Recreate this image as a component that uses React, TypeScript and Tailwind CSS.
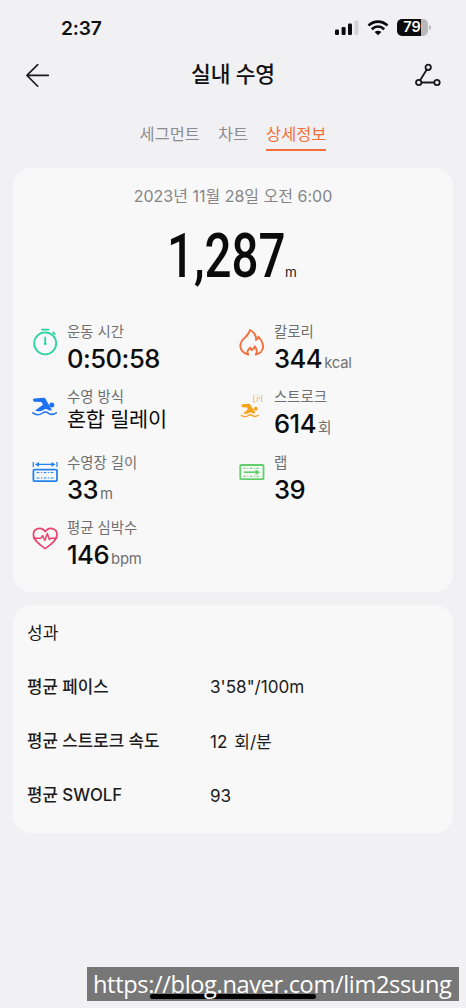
import type { ReactNode } from "react";

const SignalIcon = () => (
  <svg width="24" height="16" viewBox="0 0 24 16">
    <rect x="0" y="9.5" width="4" height="5.5" rx="1.2" fill="#0b0b0c" />
    <rect x="6.6" y="7" width="4" height="8" rx="1.2" fill="#0b0b0c" />
    <rect x="13" y="3.5" width="4" height="11.5" rx="1.2" fill="#0b0b0c" />
    <rect x="19.4" y="0.5" width="4" height="14.5" rx="1.2" fill="#d3d3d6" />
  </svg>
);

const WifiIcon = () => (
  <svg width="22" height="16" viewBox="0 0 22 16" fill="none" stroke="#0b0b0c" strokeWidth="2.7">
    <path d="M1.5 5.6C7 .4 15 .4 20.5 5.6" />
    <path d="M4.8 9.2c3.7-3.4 8.7-3.4 12.4 0" />
    <path d="M11 15.2 7.6 12c2-1.7 4.8-1.7 6.8 0z" fill="#0b0b0c" stroke="none" />
  </svg>
);

const Battery = () => (
  <div className="flex items-center">
    <div className="flex h-[17px] w-[31px] items-center justify-center rounded-[5px] bg-linear-to-r from-[#0b0b0c] from-79% to-[#b9b9bc] to-79%">
      <span className="pr-px text-[14.5px] leading-none font-semibold text-white">79</span>
    </div>
    <div className="ml-px h-[5px] w-[2px] rounded-r-full bg-[#bcbcbf]" />
  </div>
);

const BackIcon = () => (
  <svg width="24" height="24" viewBox="0 0 24 24" fill="none" stroke="#19191a" strokeWidth="1.6" strokeLinecap="round" strokeLinejoin="round">
    <path d="M23.5 12.4H1.9M12.7 1.6 1.9 12.4l10.8 10.8" />
  </svg>
);

const RouteIcon = () => (
  <svg width="26" height="24" viewBox="0 0 26 24" fill="none" stroke="#19191a" strokeWidth="1.8">
    <circle cx="13.2" cy="4.3" r="2.7" />
    <circle cx="3.7" cy="19.5" r="2.7" />
    <circle cx="22" cy="19.5" r="2.7" />
    <path d="M11.8 6.6 5.1 17.2M6.4 19.5h12.9" />
  </svg>
);

const TimerIcon = () => (
  <svg width="28" height="28" viewBox="0 0 28 28" fill="none" stroke="#2bd3a0" strokeWidth="1.8" strokeLinecap="round">
    <circle cx="14.2" cy="15.3" r="11" />
    <path d="M11 1.6h6.6M22.2 4.5l1.6 1.6M14.2 9.4v5.6" />
    <circle cx="14.2" cy="15.8" r="1.4" fill="#2bd3a0" stroke="none" />
  </svg>
);

const SwimIcon = () => (
  <svg width="28" height="28" viewBox="0 0 28 28">
    <path
      d="M3.3 5.6 12.4 4.7c1-.1 1.7.4 2.2 1.2l6.3 11.3c-1.7.7-3.1-.1-4.4-.8-1.4-.7-2.8-.4-4.2.5-2.2 1.4-5.2 1.8-8.3.6l8-5.8-1.6-2.6-6.9-.4c-1.8-.1-2.1-2.9-.2-3.1z"
      fill="#1c72f3"
    />
    <circle cx="20.8" cy="11.9" r="2.5" fill="#1c72f3" />
    <path
      d="M1.8 19.8c3.3 2.6 6.8 2.2 9.7.2 2.2-1.5 4.2-1.1 6.2.3 2.3 1.5 5 1.4 7.6-.5"
      fill="none"
      stroke="#1c72f3"
      strokeWidth="1.5"
      strokeLinecap="round"
    />
  </svg>
);

const PoolIcon = () => (
  <svg width="28" height="28" viewBox="0 0 28 28" fill="none" stroke="#2583ee" strokeWidth="1.3">
    <path d="M2.3 3v5M26 3v5M5 5.4h18" />
    <path d="M3.8 5.4 8 3v4.8zM24.6 5.4 20.4 3v4.8z" fill="#2583ee" stroke="none" />
    <rect x="2.4" y="10.6" width="23.6" height="11.5" rx="0.8" strokeWidth="1.8" />
    <path d="M5.5 13.6h17.5M5.5 19h17.5" strokeWidth="1" strokeDasharray="3 1.4 1.2 1.4" />
  </svg>
);

const HeartIcon = () => (
  <svg width="28" height="28" viewBox="0 0 28 28" fill="none" stroke="#ea4673" strokeWidth="1.7" strokeLinecap="round" strokeLinejoin="round">
    <path d="M14.2 24.6C8.2 20.4 2.4 16 2.4 10.4c0-6.3 8.2-8.2 11.8-2.9C17.8 2.2 26 4.1 26 10.4c0 5.6-5.8 10-11.8 14.2z" />
    <path d="M3 14.3h6.8l1.8-2.7 2.2 4.8 2.5-7 2 6.2 1.3-1.3h5.9" strokeWidth="1.5" />
  </svg>
);

const FireIcon = () => (
  <svg width="28" height="28" viewBox="0 0 28 28" fill="none" stroke="#f2713d" strokeWidth="1.9" strokeLinecap="round" strokeLinejoin="round">
    <path d="M10.4 26.6C.3 24 .8 15 6.3 10.1 9.6 7.2 11.4 5 11.9 2c4 2 6.3 5.7 6.2 10 1.3-.6 2-1.7 2.2-3.2 7 7 6.4 15.6-2.6 17.8 2.2-3 1.1-5.6-.9-8.4-.4 2-1.4 3.2-3 4-.7-.8-1.1-1.6-1.2-2.6-3 2-4.1 4.6-2.2 7z" />
  </svg>
);

const StrokeIcon = () => (
  <svg width="28" height="28" viewBox="0 0 28 28">
    <g fill="none" stroke="#f8bd63" strokeWidth="1">
      <path d="M15.7 1.8v7.2h1.7M19.2 9V4.4M19.2 5.4c.9-1.2 2.2-1 2.2.3M21.4 4.2v1.6M23.6 9V2M19 2.4h1.2" />
    </g>
    <path
      d="M4.6 11.3l6.1-.6c.8 0 1.2.3 1.6 1l5.2 8.4c-1.4.6-2.4.3-3.5-.3-1.5-.8-2.8-.1-3.7.5-1.5.8-3.8.6-5.2-.1l4.8-3.7-1-1.9-4.3-.4c-1.3 0-1.4-2.6 0-2.9z"
      fill="#f6a21a"
    />
    <circle cx="17.7" cy="15.7" r="2" fill="#f6a21a" />
    <path d="M3.3 22.2c2.4 1.9 4.8 1.8 7 .3 1.5-1.1 3-.8 4.3.1 1.7 1.2 3.6 1.1 5.6-.3" fill="none" stroke="#f6a21a" strokeWidth="1.3" strokeLinecap="round" />
  </svg>
);

const LapIcon = () => (
  <svg width="28" height="28" viewBox="0 0 28 28" fill="none" stroke="#63cf6c" strokeWidth="1.8">
    <rect x="2.3" y="6" width="23.2" height="14.2" rx="0.8" />
    <path d="M5.2 9.2h17.5M5.2 17.2h17.5" strokeWidth="1.1" strokeDasharray="2.6 1.4 1.2 1.4" />
    <path d="M6 13.2h12" strokeWidth="1.7" />
    <path d="M22.3 13.2 17.5 10.4V16z" fill="#63cf6c" stroke="none" />
  </svg>
);

type StatProps = {
  icon: ReactNode;
  label: string;
  value: string;
  unit?: string;
};

const Stat = ({ icon, label, value, unit }: StatProps) => (
  <div className="flex h-[65.3px] w-[207px] gap-x-2">
    <div className="pt-2">{icon}</div>
    <div className="flex flex-col pt-px">
      <span className="h-[21px] text-[14.4px] leading-[21px] text-[#6f6f70]">{label}</span>
      {/[가-힣]/.test(value) ? (
        <span className="text-[20.8px] leading-[26px] tracking-[-0.3px] text-[#0c0c0c]">{value}</span>
      ) : (
        <div className="flex items-baseline gap-x-px leading-[33px]">
          <span className="text-[25.6px] font-medium tracking-[-0.5px] text-[#0c0c0c]">{value}</span>
          <span className="pl-px pb-[2px] text-[14.8px] tracking-[-0.2px] text-[#6f6f70]">{unit}</span>
        </div>
      )}
    </div>
  </div>
);

const results = [
  { label: "평균 페이스", value: "3'58\"/100m" },
  { label: "평균 스트로크 속도", value: "12 회/분" },
  { label: "평균 SWOLF", value: "93" },
];

export default function App() {
  return (
    <div className="relative h-[1008px] w-[466px] overflow-hidden bg-[#f1f1f4] font-['Inter','Noto_Sans_CJK_KR',sans-serif] whitespace-nowrap">
      <div className="flex h-[46px] items-end justify-between pr-[35px] pl-[61px]">
        <span className="text-[19.2px] leading-[35px] font-semibold tracking-[-0.2px] text-[#101011]">2:37</span>
        <div className="flex h-[37px] items-center gap-x-2">
          <SignalIcon />
          <WifiIcon />
          <Battery />
        </div>
      </div>

      <header className="flex h-[58px] items-center justify-between px-[25px]">
        <BackIcon />
        <h1 className="pb-[3px] pl-[2px] text-[21.5px] leading-8 font-medium tracking-[-0.2px] text-[#111112]">실내 수영</h1>
        <RouteIcon />
      </header>

      <nav className="flex h-16 justify-center gap-x-[18px] pt-[17px] text-[16.4px] leading-[26px] text-[#8d8d90]">
        <span>세그먼트</span>
        <span>차트</span>
        <span className="h-[30px] border-b-2 border-[#f2703a] text-[#f2703a]">상세정보</span>
      </nav>

      <section className="mx-[13px] h-[424px] rounded-[18px] bg-[#f8f8f8]">
        <p className="pt-4 text-center text-[16px] leading-6 text-[#858587]">2023년 11월 28일 오전 6:00</p>
        <div className="flex h-[112px] items-baseline pt-[12px] pl-[154px]">
          <div className="w-[118px]">
            <span className="inline-block origin-left scale-x-[0.785] font-[Roboto] text-[60.5px] leading-[74px] font-medium text-[#0b0b0b]">1,287</span>
          </div>
          <span className="text-[13.5px] text-[#222]">m</span>
        </div>
        <div className="flex flex-wrap pl-[18px]">
          <Stat icon={<TimerIcon />} label="운동 시간" value="0:50:58" />
          <Stat icon={<FireIcon />} label="칼로리" value="344" unit="kcal" />
          <Stat icon={<SwimIcon />} label="수영 방식" value="혼합 릴레이" />
          <Stat icon={<StrokeIcon />} label="스트로크" value="614" unit="회" />
          <Stat icon={<PoolIcon />} label="수영장 길이" value="33" unit="m" />
          <Stat icon={<LapIcon />} label="랩" value="39" />
          <Stat icon={<HeartIcon />} label="평균 심박수" value="146" unit="bpm" />
        </div>
      </section>

      <section className="mx-[13px] mt-[13px] h-[228px] rounded-[18px] bg-[#f8f8f8] px-[14px] pt-[15px]">
        <h2 className="text-[17px] leading-[26px] text-[#1a1a1b]">성과</h2>
        <div className="pt-[14px]">
          {results.map((r) => (
            <div key={r.label} className="flex h-[54.3px] items-center text-[16.8px] text-[#1c1c1d]">
              <span className="w-[183px] font-medium word-spacing-[1px]">{r.label}</span>
              <span className="text-[17.1px] [word-spacing:2px]">{r.value}</span>
            </div>
          ))}
        </div>
      </section>

      <div className="absolute top-[967px] left-[87px] h-[34px] w-[372px] bg-[#777777]">
        <div className="absolute top-[27px] left-[63px] h-[5px] w-[166px] rounded-full bg-black" />
        <span className="absolute top-0 left-[6px] font-['Open_Sans'] text-[23.6px] leading-[34px] tracking-[-0.36px] text-white">
          https://blog.naver.com/lim2ssung
        </span>
      </div>
    </div>
  );
}
